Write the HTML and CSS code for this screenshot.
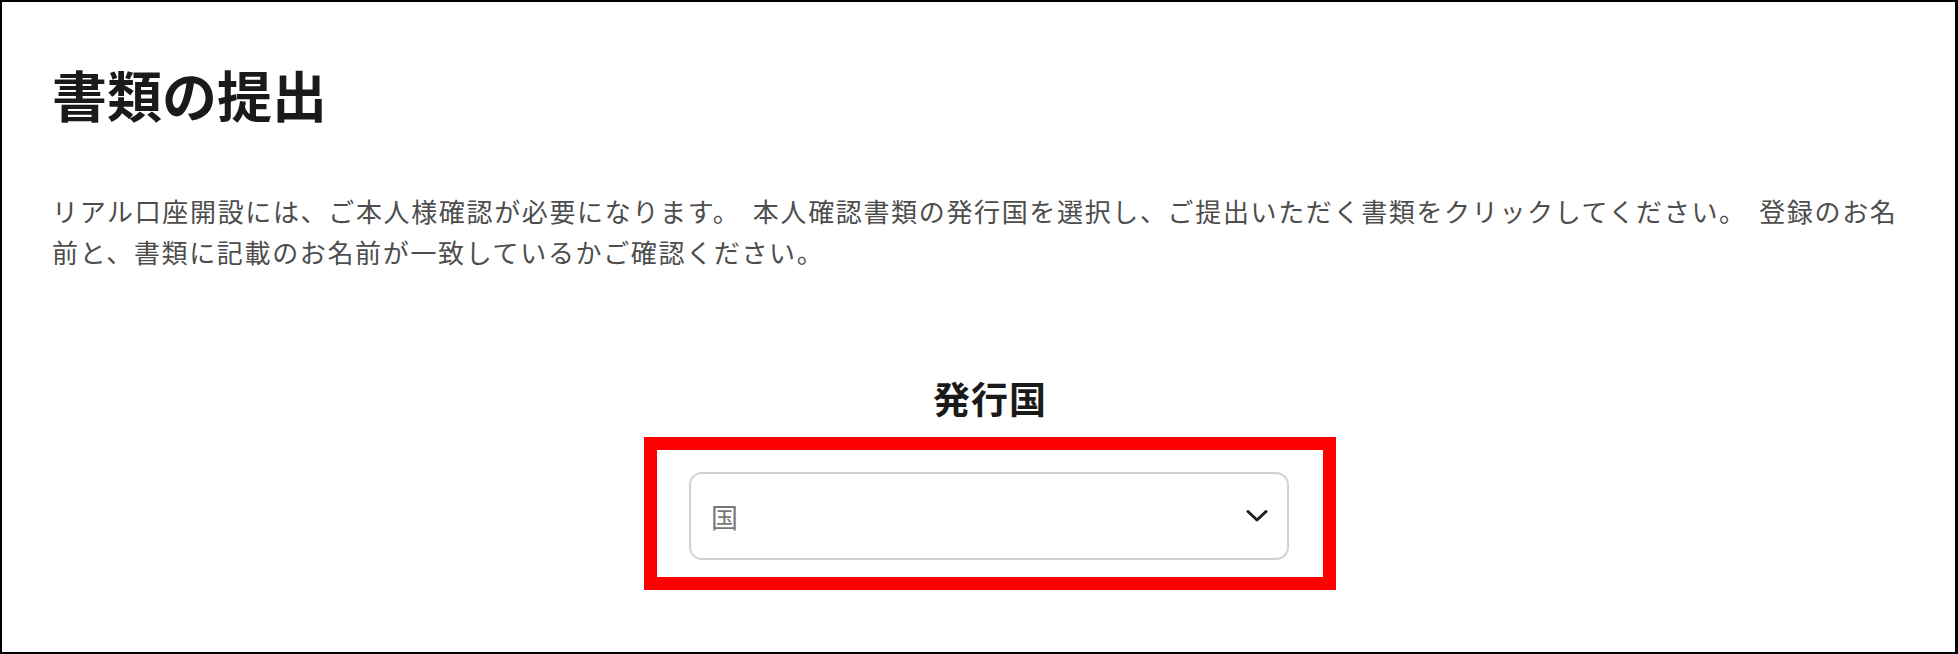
FILE: index.html
```html
<!DOCTYPE html>
<html lang="ja">
<head>
<meta charset="utf-8">
<title>書類の提出</title>
<link rel="stylesheet" href="styles.css">
</head>
<body>
<div class="frame">
  <h1 class="title">書類の提出</h1>
  <p class="lead">リアル口座開設には、ご本人様確認が必要になります。 本人確認書類の発行国を選択し、ご提出いただく書類をクリックしてください。 登録のお名前と、書類に記載のお名前が一致しているかご確認ください。</p>
  <div class="form">
    <h2 class="label">発行国</h2>
    <div class="highlight">
      <div class="select" role="combobox" aria-label="発行国">
        <span class="placeholder">国</span>
        <svg class="chevron" width="22" height="14" viewBox="0 0 22 14" aria-hidden="true">
          <polyline points="2,2.5 11,11 20,2.5" fill="none" stroke="#1f1f1f" stroke-width="3" stroke-linecap="round" stroke-linejoin="round"/>
        </svg>
      </div>
    </div>
  </div>
</div>
</body>
</html>
```

FILE: styles.css
```css
html, body {
  margin: 0;
  padding: 0;
  background: #ffffff;
}

body {
  font-family: "Noto Sans CJK JP", "Noto Sans", sans-serif;
}

.frame {
  box-sizing: border-box;
  height: 654px;
  border: 2px solid #000000;
  border-right-width: 3px;
  padding: 58px 50px 0 50px;
  overflow: hidden;
}

.title {
  margin: 0;
  font-size: 55px;
  line-height: 66px;
  font-weight: 700;
  color: #1a1a1a;
}

.lead {
  margin: 64px 0 0 0;
  font-size: 26px;
  line-height: 41px;
  letter-spacing: 1.65px;
  word-spacing: 5px;
  color: #4d4d4d;
}

.form {
  display: flex;
  flex-direction: column;
  align-items: center;
  margin-top: 104px;
  padding-left: 23px;
}

.label {
  margin: 0;
  font-size: 37px;
  line-height: 44px;
  font-weight: 700;
  letter-spacing: 1px;
  color: #1a1a1a;
}

.highlight {
  margin-top: 17px;
  border: 13px solid #ff0000;
  padding: 22px 34px 17px 32px;
}

.select {
  box-sizing: border-box;
  width: 600px;
  height: 88px;
  border: 2px solid #d2d2d2;
  border-radius: 13px;
  display: flex;
  align-items: center;
  justify-content: space-between;
  padding: 0 19px 0 20px;
  background: #ffffff;
}

.placeholder {
  font-size: 27px;
  line-height: 1;
  color: #777777;
}

.chevron {
  display: block;
}
```
